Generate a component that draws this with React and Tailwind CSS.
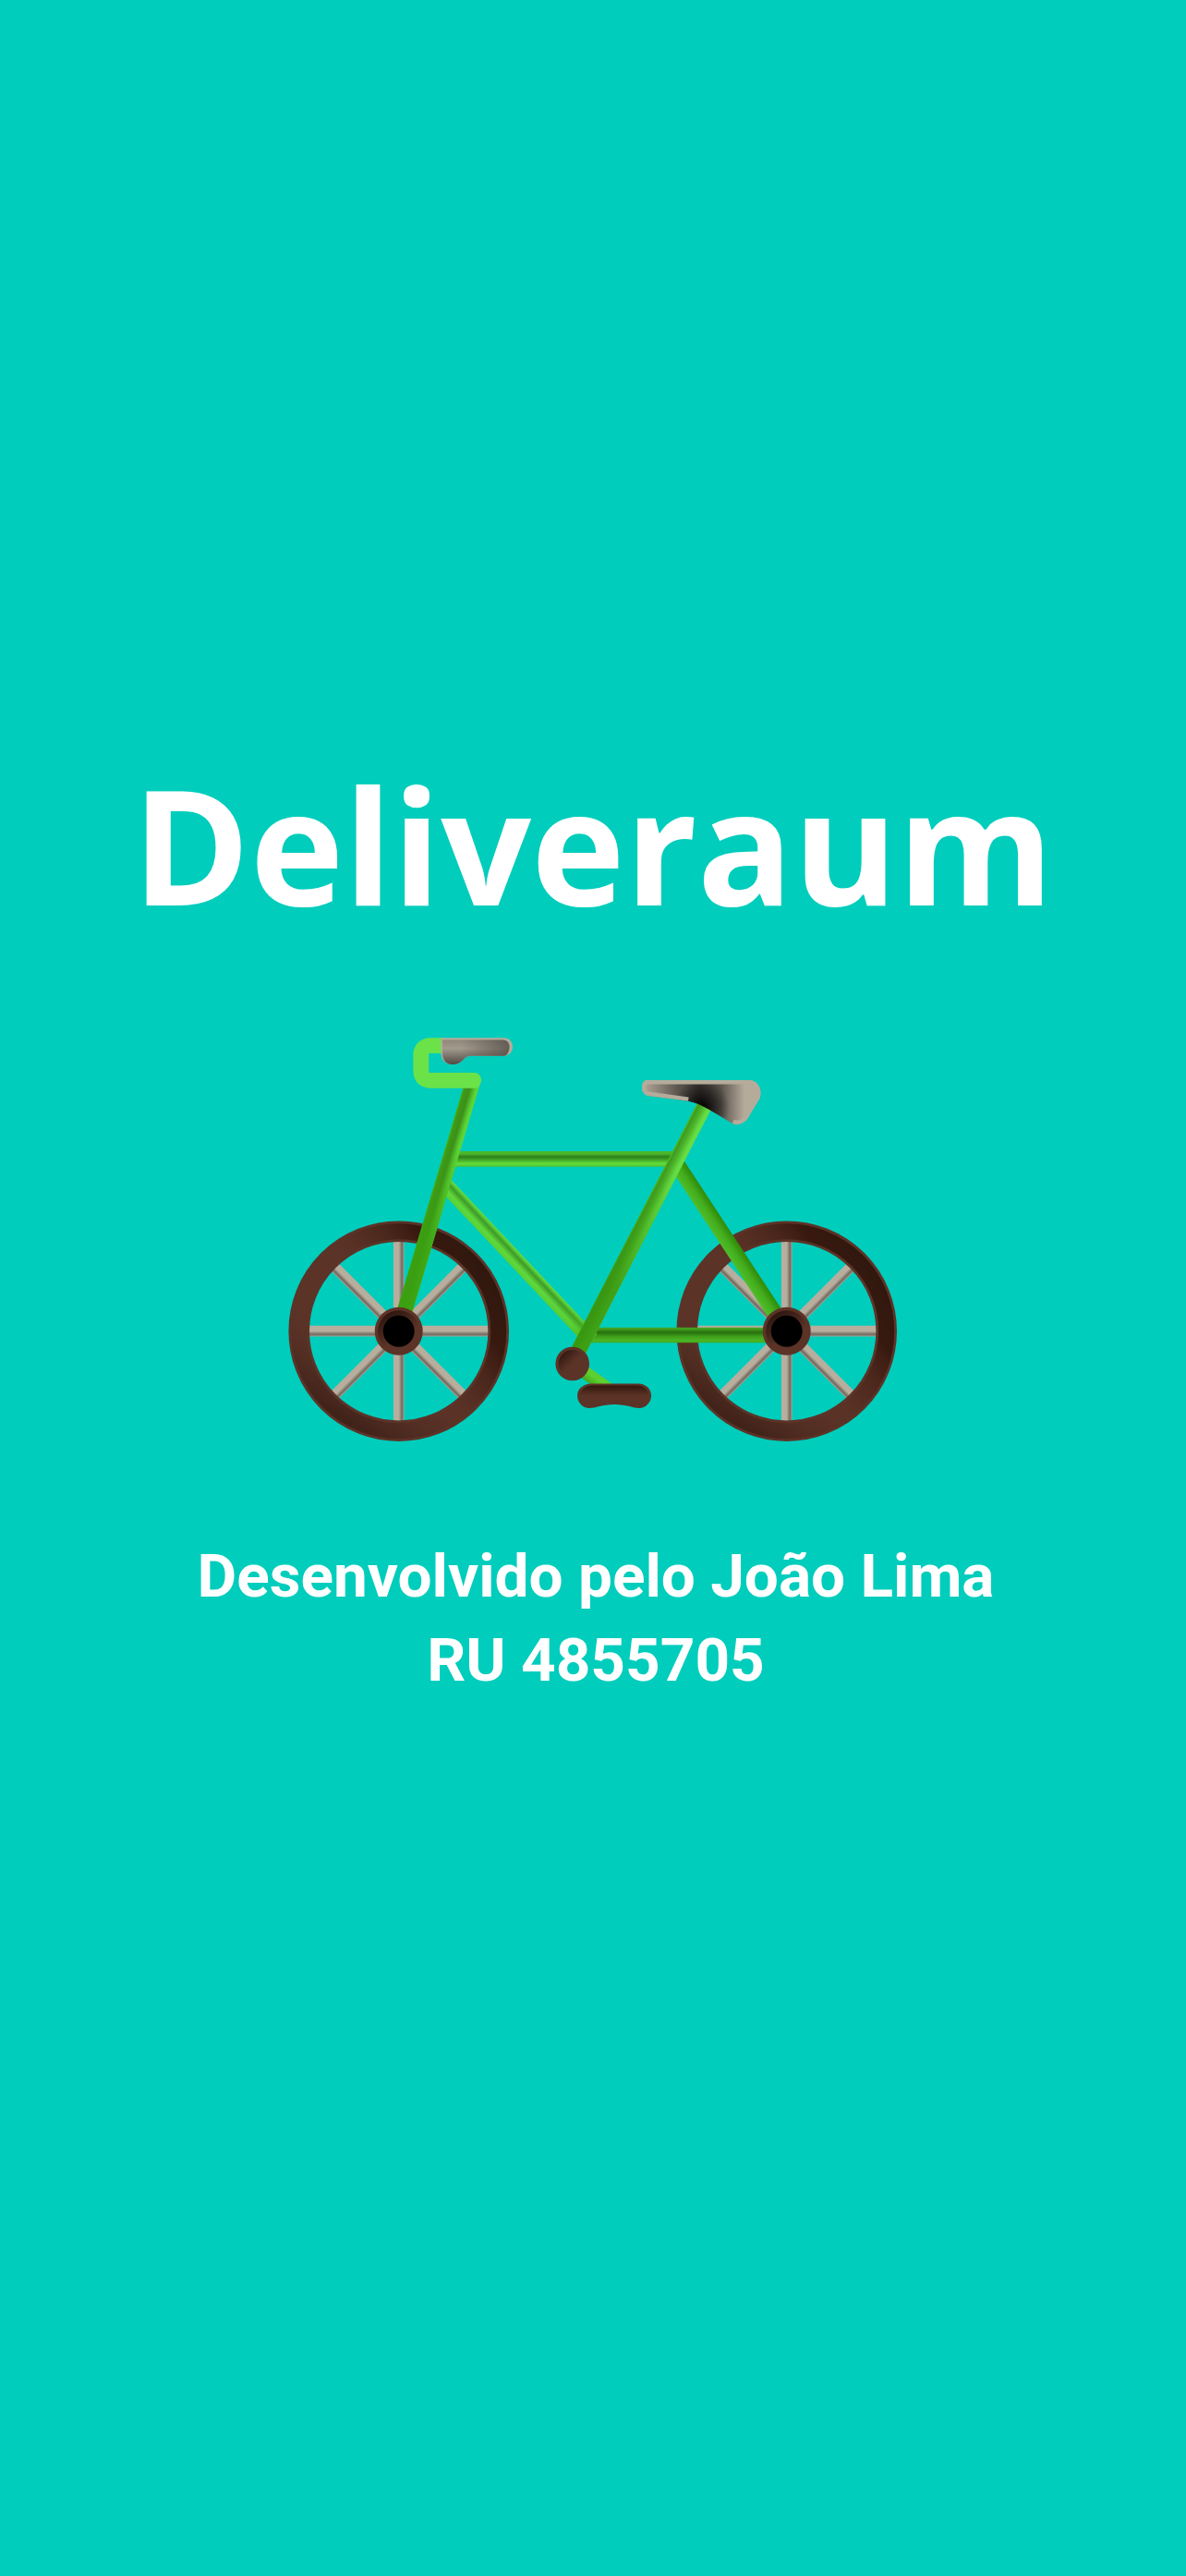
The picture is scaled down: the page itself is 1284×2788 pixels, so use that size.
import React from 'react';

const BRAKE = '#5c3327';

// one straight bar of the bike, shaded across its width
function Tube({ id, from, to, w, stops, shade }) {
    const dx = to[0] - from[0];
    const dy = to[1] - from[1];
    const len = Math.hypot(dx, dy);
    const nx = (-dy / len) * (w / 2);
    const ny = (dx / len) * (w / 2);
    const points = [
        [from[0] + nx, from[1] + ny],
        [to[0] + nx, to[1] + ny],
        [to[0] - nx, to[1] - ny],
        [from[0] - nx, from[1] - ny],
    ].map(p => p.join(',')).join(' ');

    return (
        <g>
            <defs>
                <linearGradient id={id} gradientUnits="userSpaceOnUse" x1={from[0] + nx} y1={from[1] + ny} x2={from[0] - nx} y2={from[1] - ny}>
                    {stops.map(([o, c]) => <stop key={o} offset={o} stopColor={c} />)}
                </linearGradient>
                {shade && (
                    <linearGradient id={`${id}-s`} gradientUnits="userSpaceOnUse" x1={from[0]} y1={from[1]} x2={to[0]} y2={to[1]}>
                        {shade.map(([o, c, a]) => <stop key={o} offset={o} stopColor={c} stopOpacity={a} />)}
                    </linearGradient>
                )}
            </defs>
            <polygon points={points} fill={`url(#${id})`} />
            {shade && <polygon points={points} fill={`url(#${id}-s)`} />}
        </g>
    );
}

const SPOKE_STOPS = [[0, '#b8ae9e'], [0.5, '#b8ae9e'], [0.8, '#6f6a60'], [1, '#a9a091']];

function Wheel({ id, cx, cy }) {
    const r = 97;
    const d = r * 0.7071;
    return (
        <g>
            <Tube id={`${id}-v`} from={[cx, cy - r]} to={[cx, cy + r]} w={11.7} stops={SPOKE_STOPS} />
            <Tube id={`${id}-h`} from={[cx + r, cy]} to={[cx - r, cy]} w={11.7} stops={SPOKE_STOPS} />
            <Tube id={`${id}-a`} from={[cx + d, cy - d]} to={[cx - d, cy + d]} w={11.7} stops={SPOKE_STOPS} />
            <Tube id={`${id}-b`} from={[cx + d, cy + d]} to={[cx - d, cy - d]} w={11.7} stops={SPOKE_STOPS} />
            <defs>
                <linearGradient id={`${id}-tr`} gradientUnits="userSpaceOnUse" x1={cx + 95} y1={cy - 75} x2={cx - 20} y2={cy + 5}>
                    <stop offset="0" stopColor="#2f180f" />
                    <stop offset="0.3" stopColor="#38190f" />
                    <stop offset="1" stopColor="#5c3327" stopOpacity="0" />
                </linearGradient>
                <linearGradient id={`${id}-bl`} gradientUnits="userSpaceOnUse" x1={cx - 50} y1={cy + 100} x2={cx - 5} y2={cy + 30}>
                    <stop offset="0" stopColor="#41231a" />
                    <stop offset="1" stopColor="#5c3327" stopOpacity="0" />
                </linearGradient>
                <linearGradient id={`${id}-hub`} x1="0.2" y1="0.1" x2="0.7" y2="0.9">
                    <stop offset="0" stopColor="#2e170f" />
                    <stop offset="0.7" stopColor={BRAKE} />
                </linearGradient>
            </defs>
            <circle cx={cx} cy={cy} r={108} fill="none" stroke={BRAKE} strokeWidth={22.6} />
            <circle cx={cx} cy={cy} r={108} fill="none" stroke={`url(#${id}-tr)`} strokeWidth={17} />
            <circle cx={cx} cy={cy} r={108} fill="none" stroke={`url(#${id}-bl)`} strokeWidth={17} />
        </g>
    );
}

function Hub({ id, cx, cy }) {
    return (
        <g>
            <circle cx={cx} cy={cy} r={26} fill={BRAKE} />
            <circle cx={cx} cy={cy} r={22.5} fill={`url(#${id}-hub)`} />
            <circle cx={cx} cy={cy} r={17} fill="#000" />
        </g>
    );
}

function Bike() {
    const saddle = 'M700 1169 H811 C819 1169 823.5 1176 823.5 1183 C823.5 1187 822 1190 820.5 1192 L812 1206 C808 1215 800 1219 793 1216 L773 1204 C763 1198 755 1193 740 1191 L702 1186 C698 1185.5 695 1182 695 1177.5 C695 1172.5 697 1169 700 1169 Z';
    const pedal = 'M640 1497.5 H691 C699 1497.5 705 1503 705 1510.5 C705 1518 699 1524 692 1524 C686 1524 678 1520 665 1520 C652 1520 645 1524 638 1524 C631 1524 625 1518 625 1510.5 C625 1503 632 1497.5 640 1497.5 Z';
    const grip = 'M477.5 1123.3 H545.5 C551 1123.3 555 1127.5 555 1133 C555 1138.5 551 1142.7 545.5 1142.7 H510 C506 1142.7 504 1144.5 502 1146.5 C499 1150 495 1152 491 1152 H489 C482 1152 477.5 1147 477.5 1140 Z';

    return (
        <svg className="block" width="680" height="470" viewBox="302 1110 680 470">
            <defs>
                <linearGradient id="saddle-fill" gradientUnits="userSpaceOnUse" x1="700" y1="0" x2="815" y2="0">
                    <stop offset="0" stopColor="#a89f91" />
                    <stop offset="0.3" stopColor="#5a544d" />
                    <stop offset="0.5" stopColor="#3b3733" />
                    <stop offset="0.7" stopColor="#5a544d" />
                    <stop offset="0.92" stopColor="#b5ab9b" />
                </linearGradient>
                <radialGradient id="saddle-dark" gradientUnits="userSpaceOnUse" cx="760" cy="1198" r="30">
                    <stop offset="0" stopColor="#000" stopOpacity="0.95" />
                    <stop offset="1" stopColor="#000" stopOpacity="0" />
                </radialGradient>
                <linearGradient id="grip-fill" gradientUnits="userSpaceOnUse" x1="0" y1="1125.5" x2="0" y2="1152">
                    <stop offset="0" stopColor="#8f877a" />
                    <stop offset="0.35" stopColor="#a39a8d" />
                    <stop offset="1" stopColor="#4f4a44" />
                </linearGradient>
                <linearGradient id="grip-end" gradientUnits="userSpaceOnUse" x1="500" y1="0" x2="552" y2="0">
                    <stop offset="0" stopColor="#4f4a44" stopOpacity="0" />
                    <stop offset="1" stopColor="#4f4a44" stopOpacity="0.75" />
                </linearGradient>
                <linearGradient id="pedal-fill" x1="0" y1="0" x2="0" y2="1">
                    <stop offset="0.05" stopColor="#36190f" />
                    <stop offset="0.5" stopColor={BRAKE} />
                </linearGradient>
                <linearGradient id="bracket-fill" x1="0.1" y1="0.1" x2="0.6" y2="0.6">
                    <stop offset="0" stopColor="#2e170f" />
                    <stop offset="0.8" stopColor={BRAKE} />
                </linearGradient>
                <clipPath id="saddle-clip"><path d={saddle} /></clipPath>
            </defs>

            <Wheel id="w1" cx={431.7} cy={1440.7} />
            <Wheel id="w2" cx={851.7} cy={1440.7} />

            {/* crank */}
            <Tube id="crank" from={[620, 1476]} to={[668, 1510]} w={14} stops={[[0, '#43a81f'], [0.6, '#5cd030'], [1, '#5cd030']]} />

            {/* frame */}
            <Tube
                id="top-tube"
                from={[735, 1254.3]}
                to={[490, 1254.3]}
                w={16.7}
                stops={[[0, '#4ab82a'], [0.16, '#4ab82a'], [0.36, '#2f7f1c'], [0.58, '#45ac28'], [0.8, '#62dc3c'], [1, '#4fc42c']]}
            />
            <Tube
                id="chain-stay"
                from={[851, 1445]}
                to={[632, 1445]}
                w={16.7}
                stops={[[0, '#4aa82a'], [0.12, '#3f9a1a'], [0.32, '#28700f'], [0.6, '#3fa01a'], [0.85, '#4ab524'], [1, '#42a81c']]}
            />
            <Tube
                id="seat-stay"
                from={[733, 1260]}
                to={[851.7, 1440.7]}
                w={16.7}
                stops={[[0, '#4fbd28'], [0.5, '#43ad1e'], [0.8, '#37960f'], [1, '#2e8c0c']]}
            />
            <Tube
                id="down-tube"
                from={[640, 1450]}
                to={[480, 1280]}
                w={16.5}
                stops={[[0, '#66dd44'], [0.1, '#5cd03a'], [0.32, '#3e9a28'], [0.68, '#5fd83c'], [1, '#58d036']]}
                shade={[[0, '#4ab824', 0.9], [0.12, '#4ab824', 0.2], [0.3, '#4ab824', 0]]}
            />
            <Tube
                id="seat-tube"
                from={[763, 1196]}
                to={[620, 1474]}
                w={16.5}
                stops={[[0, '#4cc024'], [0.14, '#3f9a20'], [0.45, '#4cb42a'], [0.8, '#66dd44'], [1, '#66dd44']]}
                shade={[[0.25, '#37930f', 0], [0.7, '#37930f', 0.8], [1, '#379a0f', 0.9]]}
            />
            <Tube
                id="fork"
                from={[512, 1170]}
                to={[431.7, 1440.7]}
                w={16.5}
                stops={[[0, '#4ab81c'], [0.12, '#3f9a15'], [0.45, '#3c8f1c'], [0.8, '#58cf30'], [1, '#62d83c']]}
                shade={[[0.25, '#3aa010', 0], [0.65, '#3aa010', 0.85], [1, '#3aa010', 0.95]]}
            />

            <Hub id="w1" cx={431.7} cy={1440.7} />
            <Hub id="w2" cx={851.7} cy={1440.7} />

            {/* bottom bracket and pedal */}
            <circle cx={619.7} cy={1476} r={18.3} fill={BRAKE} />
            <circle cx={619.7} cy={1476} r={15} fill="url(#bracket-fill)" />
            <path d={pedal} fill={BRAKE} />
            <path d={pedal} fill="url(#pedal-fill)" transform="translate(665 1510) scale(0.93 0.85) translate(-665 -1510)" />

            {/* handlebar */}
            <path
                d="M480 1123.3 H466 C455 1123.3 447.3 1131 447.3 1142 V1159 C447.3 1170 455 1177.7 466 1177.7 H516.5 C518 1177 520 1174 521 1170 C521.5 1165 518 1161 513 1161 H464.3 V1140 H480 Z"
                fill="#6be248"
            />
            <path d={grip} fill="#b5ab9b" />
            <path
                id="grip-inner"
                d="M479 1125.5 H544 C549 1125.5 551.5 1129 551.5 1133 C551.5 1138 549 1142.7 545.5 1142.7 H510 C506 1142.7 504 1144.5 502 1146.5 C499 1150 495 1152 491 1152 H489 C483 1152 479 1147 479 1140 Z"
                fill="url(#grip-fill)"
            />
            <path d="M500 1125.5 H544 C549 1125.5 551.5 1129 551.5 1133 C551.5 1138 549 1142.7 545.5 1142.7 H500 Z" fill="url(#grip-end)" />

            {/* saddle */}
            <path d={saddle} fill="url(#saddle-fill)" />
            <path d={saddle} fill="url(#saddle-dark)" />
            <g clipPath="url(#saddle-clip)">
                <path
                    d="M745 1192 L702 1186 C698 1185.5 695 1182 695 1177.5 C695 1172.5 697 1169 700 1169 H811 C819 1169 823.5 1176 823.5 1183 C823.5 1187 822 1190 820.5 1192 L812 1206 C808 1215 800 1219 793 1216"
                    fill="none"
                    stroke="#b5ab9b"
                    strokeWidth="9"
                />
            </g>
        </svg>
    );
}

export default function App() {
    return (
        <div className="min-h-[2788px] bg-[#00cdbc] flex flex-col items-center pt-[796px] text-white">
            <h1 className="font-['Open_Sans',sans-serif] font-bold text-[172px] leading-[234px]">Deliveraum</h1>
            <div className="mt-[80px]">
                <Bike />
            </div>
            <div className="mt-[80px] pl-[6px] font-['Roboto',sans-serif] font-bold text-[65.7px] leading-[91px] text-center">
                <p>Desenvolvido pelo João Lima</p>
                <p>RU 4855705</p>
            </div>
        </div>
    );
}
